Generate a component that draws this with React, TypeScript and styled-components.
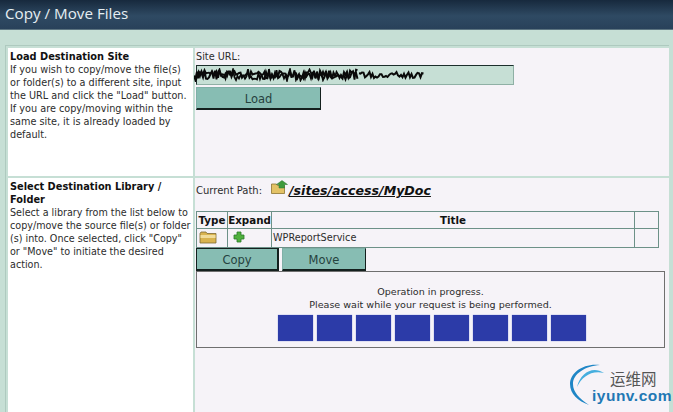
import styled, { createGlobalStyle } from "styled-components";

const GlobalStyle = createGlobalStyle`
  html, body {
    margin: 0;
    padding: 0;
    background: #c6dfd5;
    overflow: hidden;
  }
  * {
    box-sizing: border-box;
  }
`;

const Page = styled.div`
  position: relative;
  width: 673px;
  height: 412px;
  overflow: hidden;
  font-family: "DejaVu Sans", Verdana, sans-serif;
  font-size: 9.7px;
  color: #2c2c2c;
`;

const Header = styled.header`
  height: 30px;
  padding: 3px 0 0 5px;
  background: linear-gradient(#17293d, #2f4a63 55%, #28415a);
  border-bottom: 1px solid #5c7480;
  color: #e6eef2;
  font-family: "Open Sans", sans-serif;
  font-size: 15.2px;
  line-height: 20px;
`;

const Form = styled.div`
  display: grid;
  grid-template-columns: 185px 1fr;
  grid-template-rows: 128px 1fr;
  gap: 2px;
  width: 664px;
  height: 372px;
  margin: 15px 0 0 5px;
  padding: 2px 0 0 2px;
  border-top: 1px solid #aecabf;
  border-left: 1px solid #aecabf;
`;

const InfoCell = styled.div<{ $size?: number }>`
  padding: 2px 0 2px 2px;
  background: #fff;
  font-size: ${(p) => p.$size ?? 9.7}px;
  line-height: 13px;
`;

const InfoTitle = styled.div`
  padding-right: 20px;
  font-size: 9.8px;
  font-weight: bold;
  color: #111;
`;

const InfoLine = styled.div`
  white-space: nowrap;
`;

const FieldCell = styled.div`
  padding: 3px 0 0 1px;
  background: #f6f3f8;
`;

const FieldLabel = styled.div`
  line-height: 12px;
  margin-bottom: 2px;
`;

const UrlBox = styled.div`
  position: relative;
  width: 318px;
  height: 20px;
  background: #c6dfd5;
  border: 1px solid #8fb0a5;
  border-top: 1px solid #1c2f2c;
  border-left: 1px solid #1c2f2c;
`;

const Scribble = styled.svg`
  position: absolute;
  left: -3px;
  top: 2px;
`;

const Action = styled.button<{ $w: number; $active?: boolean }>`
  display: block;
  width: ${(p) => p.$w}px;
  height: 23px;
  padding: 1px 0 0;
  background: #87bdb3;
  border: 1px solid #7fb0a7;
  border-right: ${(p) => (p.$active ? 2 : 1)}px solid #14201e;
  border-bottom: 2px solid #14201e;
  border-top-color: ${(p) => (p.$active ? "#14201e" : "#7fb0a7")};
  border-left-color: ${(p) => (p.$active ? "#14201e" : "#7fb0a7")};
  font-family: inherit;
  font-size: 11.5px;
  color: #26423e;
`;

const LoadRow = styled.div`
  margin-top: 2px;
`;

const PathRow = styled.div`
  display: flex;
  align-items: flex-end;
  height: 19px;
  margin-top: -1px;
  white-space: nowrap;
`;

const PathLabel = styled.span`
  width: 75px;
  margin-bottom: 1px;
  font-size: 10px;
  line-height: 14px;
`;

const PathIcon = styled.svg`
  margin-bottom: 5px;
  flex: none;
`;

const PathLink = styled.a`
  font-size: 12.6px;
  line-height: 17px;
  font-weight: bold;
  font-style: italic;
  text-decoration: underline;
  color: #111;
`;

const LibraryTable = styled.table`
  width: 463px;
  height: 37px;
  margin-top: 12px;
  border-collapse: collapse;
  table-layout: fixed;
  border: 1px solid #6d9188;
`;

const HeadCell = styled.th<{ $w?: number }>`
  width: ${(p) => (p.$w ? `${p.$w}px` : "auto")};
  height: 17px;
  padding: 0;
  border: 1px solid #6d9188;
  font-size: 10.3px;
  color: #111;
`;

const BodyCell = styled.td<{ $pad?: number }>`
  padding: 0 0 0 ${(p) => p.$pad ?? 0}px;
  height: 19px;
  border: 1px solid #6d9188;
  line-height: 10px;
`;

const ButtonRow = styled.div`
  display: flex;
  gap: 3px;
`;

const ProgressBox = styled.div`
  width: 469px;
  height: 77px;
  padding-top: 13px;
  border: 1px solid #6f6f6f;
  text-align: center;
  font-size: 9.55px;
  line-height: 13px;
`;

const Blocks = styled.div`
  display: flex;
  justify-content: center;
  gap: 4px;
  margin-top: 4px;
  padding-left: 2px;
`;

const Block = styled.div`
  width: 35px;
  height: 26px;
  background: #2c3ba8;
  box-shadow: 0 0 1px #6f82d8;
`;

const Watermark = styled.div`
  position: absolute;
  left: 569px;
  top: 364px;
  width: 104px;
  height: 48px;
`;

const WatermarkName = styled.span`
  position: absolute;
  left: 41px;
  top: 5px;
  font-family: "Noto Sans CJK SC", sans-serif;
  font-size: 15.5px;
  line-height: 18px;
  color: #555;
`;

const WatermarkUrl = styled.span`
  position: absolute;
  left: 23px;
  top: 23px;
  font-family: "Liberation Sans", sans-serif;
  font-weight: bold;
  font-size: 15.5px;
  letter-spacing: 0.5px;
  line-height: 18px;
  color: #1f78b4;
`;

const selectHelp = [
  "Select a library from the list below to",
  "copy/move the source file(s) or folder",
  '(s) into. Once selected, click "Copy"',
  'or "Move" to initiate the desired',
  "action.",
];

// jagged pen strokes that hide the address in the reference
const buildScribble = (from: number, to: number, spread: number, seed: number) => {
  const pts: string[] = [];
  for (let x = from; x < to; x += 1.5) {
    const n = Math.sin(x * 12.9898 + seed) * 43758.5453;
    const noise = n - Math.floor(n);
    const y = 7 + (noise * 2 - 1) * spread;
    pts.push(`${x},${y.toFixed(1)}`);
  }
  return pts.join(" ");
};

const App = () => {
  return (
    <Page>
      <GlobalStyle />
      <Header>Copy / Move Files</Header>
      <Form>
        <InfoCell>
          <InfoTitle>Load Destination Site</InfoTitle>
          If you wish to copy/move the file(s) or folder(s) to a different site, input the URL and
          click the "Load" button. If you are copy/moving within the same site, it is already
          loaded by default.
        </InfoCell>
        <FieldCell>
          <FieldLabel>Site URL:</FieldLabel>
          <UrlBox>
            <Scribble width="232" height="14" viewBox="0 0 232 14">
              <polyline points={buildScribble(0, 165, 6, 1)} fill="none" stroke="#0a0a0a" strokeWidth="1.8" />
              <polyline points={buildScribble(0, 165, 4, 7)} fill="none" stroke="#0a0a0a" strokeWidth="2" />
              <polyline points={buildScribble(165, 230, 3, 3)} fill="none" stroke="#0a0a0a" strokeWidth="2" />
            </Scribble>
          </UrlBox>
          <LoadRow>
            <Action $w={125}>Load</Action>
          </LoadRow>
        </FieldCell>
        <InfoCell $size={9.6}>
          <InfoTitle>Select Destination Library / Folder</InfoTitle>
          {selectHelp.map((line) => (
            <InfoLine key={line}>{line}</InfoLine>
          ))}
        </InfoCell>
        <FieldCell>
          <PathRow>
            <PathLabel>Current Path:</PathLabel>
            <PathIcon width="18" height="14" viewBox="0 0 18 14">
              <path d="M0.5 4h5l1 1.5h7V13.5H0.5z" fill="#e3c266" stroke="#8c7430" strokeWidth="0.8" />
              <path d="M8 8V4.5H5.5L11 0.5l5.5 4h-3V8z" fill="#3f9a3c" stroke="#2b7430" strokeWidth="0.5" />
            </PathIcon>
            <PathLink>/sites/access/MyDoc</PathLink>
          </PathRow>
          <LibraryTable>
            <thead>
              <tr>
                <HeadCell $w={31}>Type</HeadCell>
                <HeadCell $w={44}>Expand</HeadCell>
                <HeadCell>Title</HeadCell>
                <HeadCell $w={24} />
              </tr>
            </thead>
            <tbody>
              <tr>
                <BodyCell $pad={2}>
                  <svg width="18" height="13" viewBox="0 0 18 13">
                    <path d="M1 2.5 2 1h5l1 1.5h9V12H1z" fill="#d9b34f" stroke="#7d6a33" strokeWidth="0.8" />
                    <path d="M1.5 4h15v3h-15z" fill="#f1dc9a" />
                  </svg>
                </BodyCell>
                <BodyCell $pad={5}>
                  <svg width="12" height="12" viewBox="0 0 12 12">
                    <path
                      d="M4 1h4v3h3v4H8v3H4V8H1V4h3z"
                      fill="#4fb03d"
                      stroke="#2c7a2a"
                      strokeWidth="0.8"
                    />
                  </svg>
                </BodyCell>
                <BodyCell $pad={1}>WPReportService</BodyCell>
                <BodyCell />
              </tr>
            </tbody>
          </LibraryTable>
          <ButtonRow>
            <Action $w={83} $active>
              Copy
            </Action>
            <Action $w={84}>Move</Action>
          </ButtonRow>
          <ProgressBox>
            Operation in progress.
            <br />
            Please wait while your request is being performed.
            <Blocks>
              {Array.from({ length: 8 }).map((_, i) => (
                <Block key={i} />
              ))}
            </Blocks>
          </ProgressBox>
        </FieldCell>
      </Form>
      <Watermark>
        <svg width="40" height="44" viewBox="0 0 40 44">
          <path d="M31 1C14-1 1 9 1 20c0 10 8 17 19 21C10 34 4 28 4 20 4 10 16 2 31 1z" fill="#1f86c6" />
          <path d="M35 9C24 2 12 8 8 23 13 13 22 6 35 9z" fill="#45aede" />
        </svg>
        <WatermarkName>运维网</WatermarkName>
        <WatermarkUrl>iyunv.com</WatermarkUrl>
      </Watermark>
    </Page>
  );
};

export default App;
